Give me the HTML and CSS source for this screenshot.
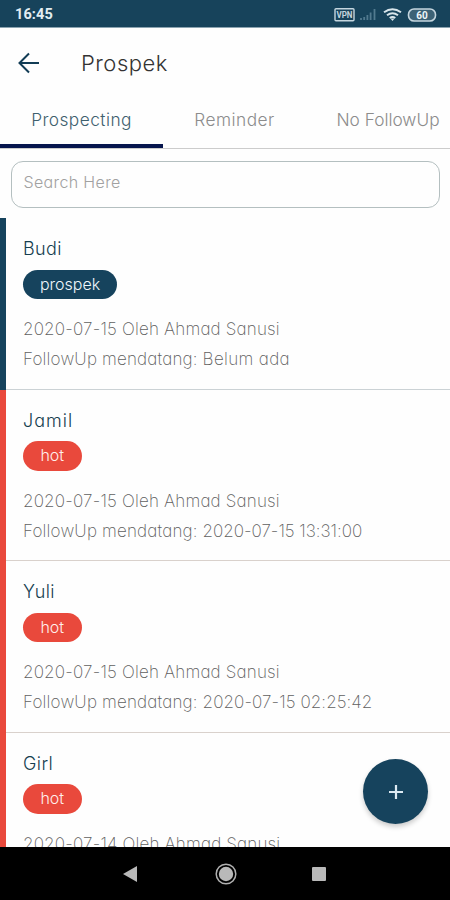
FILE: index.html
```html
<!DOCTYPE html>
<html lang="id">
<head>
<meta charset="utf-8">
<title>Prospek</title>
<link rel="stylesheet" href="styles.css">
</head>
<body>
<div class="app">
  <div class="status">
    <span class="clock">16:45</span>
    <svg class="status-icons" width="104" height="16" viewBox="0 0 104 16">
      <rect x="1" y="1.7" width="19" height="12" rx="1" fill="none" stroke="#c5d6df" stroke-width="1.4"/>
      <text x="10.5" y="11" text-anchor="middle" textLength="16" lengthAdjust="spacingAndGlyphs" class="vpn">VPN</text>
      <path d="M27 13v-2M30.2 13v-3M33.4 13V8M36.6 13V5.500M40.500 13V2" stroke="#527a8f" stroke-width="1.800"/>
      <g fill="none" stroke="#d8e5eb" stroke-width="2">
        <path d="M50 5.200q8.500-6 17 0"/><path d="M53 8.300q5.500-4.200 11 0"/><path d="M55.700 11q2.800-2 5.600 0"/>
      </g>
      <path d="M56.500 11.500h4l-2 2.500z" fill="#d8e5eb"/>
      <rect x="74.500" y="2" width="27" height="12" rx="5.500" fill="#3c6276" stroke="#c5d6df" stroke-width="1.600"/>
      <text x="88" y="11.700" text-anchor="middle" class="battery">60</text>
    </svg>
  </div>
  <header class="header">
    <svg width="22" height="22" viewBox="0 0 22 22" fill="none" stroke="#123c55" stroke-width="2"><path d="M21 11H2M11 1.500L1.500 11L11 20.500"/></svg>
    <h1 class="title">Prospek</h1>
  </header>
  <nav class="tabs">
    <span class="tab active"><span class="t1">Prospecting</span></span>
    <span class="tab"><span class="t2">Reminder</span></span>
    <span class="tab"><span class="t3">No FollowUp</span></span>
  </nav>
  <div class="search"><span>Search Here</span></div>
  <main class="list">
    <article class="item cold">
      <h2 class="name">Budi</h2><span class="pill">prospek</span>
      <p class="meta">2020-07-15 Oleh Ahmad Sanusi</p>
      <p class="meta follow">FollowUp mendatang: <span class="none">Belum ada</span></p>
    </article>
    <article class="item">
      <h2 class="name wide">Jamil</h2><span class="pill">hot</span>
      <p class="meta">2020-07-15 Oleh Ahmad Sanusi</p>
      <p class="meta follow">FollowUp mendatang: <span class="when">2020-07-15 13:31:00</span></p>
    </article>
    <article class="item">
      <h2 class="name">Yuli</h2><span class="pill">hot</span>
      <p class="meta">2020-07-15 Oleh Ahmad Sanusi</p>
      <p class="meta follow">FollowUp mendatang: <span class="when late">2020-07-15 02:25:42</span></p>
    </article>
    <article class="item">
      <h2 class="name">Girl</h2><span class="pill">hot</span>
      <p class="meta">2020-07-14 Oleh Ahmad Sanusi</p>
    </article>
    <button class="fab" aria-label="Tambah"><svg width="16" height="16" viewBox="0 0 16 16"><path d="M8 1v14M1 8h14" stroke="#dceaf2" stroke-width="2.200"/></svg></button>
  </main>
  <footer class="navbar">
    <svg width="14" height="16" viewBox="0 0 14 16"><path d="M0 8L14 0v16z" fill="#b9b9b9"/></svg>
    <svg width="22" height="22" viewBox="0 0 22 22"><circle cx="11" cy="11" r="9.800" fill="none" stroke="#b0b0b0" stroke-width="1.500"/><circle cx="11" cy="11" r="7.200" fill="#b9b9b9"/></svg>
    <svg width="14" height="14" viewBox="0 0 14 14"><rect width="14" height="14" rx="1" fill="#b9b9b9"/></svg>
  </footer>
</div>
</body>
</html>
```
FILE: styles.css
```css
* { box-sizing: border-box; margin: 0; }
body { background: #fff; }
.app {
  width: 450px; height: 900px; overflow: hidden;
  display: flex; flex-direction: column;
  background: #fefefe; color: #606060;
  font-family: Inter, "Open Sans", sans-serif; font-weight: 300;
  font-feature-settings: "cv11", "ss03", "calt" 0;
  white-space: nowrap;
}
.status {
  flex: none; height: 28px; background: #17435b; border-bottom: 1px solid #8ba3b0;
  display: flex; align-items: center; justify-content: space-between;
  padding: 2px 12px 0 15px;
}
.clock { font: 700 14.5px/18px Roboto, sans-serif; color: #e2edf2; letter-spacing: .1px; padding-top: 1px; }
.vpn { font: 700 8.5px Roboto, sans-serif; fill: #c5d6df; }
.battery { font: 700 10px Roboto, sans-serif; fill: #eef5f8; }
.header { flex: none; height: 68px; display: flex; align-items: center; gap: 41px; padding: 1px 0 0 18px; }
.title { font-size: 22px; line-height: 30px; font-weight: 300; color: #333; letter-spacing: .5px; }
.tabs { flex: none; height: 53px; display: flex; border-bottom: 1px solid #ccc; font-size: 17.3px; color: #8c8c8c; }
.tab { width: 163px; flex: none; display: flex; justify-content: center; line-height: 47px; height: 52px; }
.tab:nth-child(2) { width: 143px; }
.tab:nth-child(3) { width: 144px; padding-left: 20px; }
.t1 { letter-spacing: .45px; }
.t2 { letter-spacing: .5px; }
.active { color: #3f606e; border-bottom: 4px solid #06154d; }
.search {
  flex: none; margin: 12px 10px 10px 11px; height: 47px; border: 1px solid #b4bfc0; border-radius: 12px;
  padding: 0 11.5px; font-size: 16px; line-height: 40px; color: #a1a1a1; letter-spacing: .35px;
}
.list { flex: 1; min-height: 0; overflow: hidden; position: relative; }
.item { height: 171.5px; border-left: 6px solid #e9493c; padding: 18px 0 0 17px; box-shadow: inset 0 -1px #d9d1cc; }
.cold { border-color: #16435d; box-shadow: inset 0 -1px #cbd2d5; }
.name { font-size: 18px; line-height: 26px; font-weight: 300; color: #163e50; letter-spacing: .4px; }
.name.wide { letter-spacing: 1px; }
.pill {
  display: block; width: 58.5px; height: 29.5px; border-radius: 15px; margin-top: 7.5px;
  background: #e9493c; color: #ffefec; font-size: 16px; line-height: 29px; text-align: center;
}
.cold .pill { width: 94px; background: #16435d; color: #eff7fb; }
.meta { font-size: 17px; font-weight: 250; line-height: 30px; margin-top: 15px; letter-spacing: .17px; }
.meta.follow { margin-top: 0; }
.none { letter-spacing: .35px; }
.when { letter-spacing: -.03px; }
.late { letter-spacing: .07px; }
.fab {
  position: absolute; right: 22px; bottom: 23px; width: 65px; height: 65px; border: 0; border-radius: 50%;
  background: #16435d; box-shadow: 0 3px 5px #0003; display: flex; align-items: center; justify-content: center; padding: 0;
}
.navbar { flex: none; height: 53px; background: #000; display: flex; align-items: center; padding: 1px 0 0 123px; }
.navbar svg:nth-child(2) { margin-left: 78px; }
.navbar svg:nth-child(3) { margin-left: 75px; }
```
